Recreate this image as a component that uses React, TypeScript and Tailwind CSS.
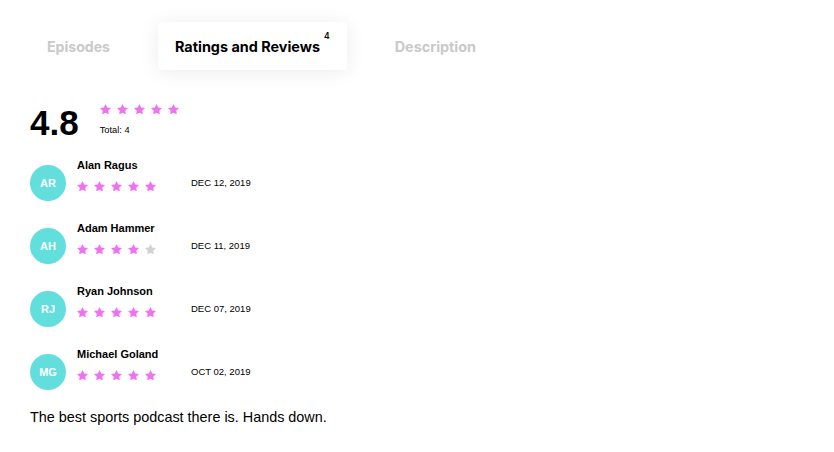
import React from "react";

const PINK = "#ee72f1";
const GRAY = "#d2d2d2";

function Star({ color, size = 11 }: { color: string; size?: number }) {
  return (
    <svg width={size} height={size * 0.951} viewBox="0 0 20 19.02" className="block shrink-0">
      <polygon
        points="10,0 13.09,6.26 20,7.27 15,12.14 16.18,19.02 10,15.77 3.82,19.02 5,12.14 0,7.27 6.91,6.26"
        fill={color}
      />
    </svg>
  );
}

function Stars({ n }: { n: number }) {
  return (
    <div className="flex gap-[6px]">
      {[0, 1, 2, 3, 4].map((i) => (
        <Star key={i} color={i < n ? PINK : GRAY} />
      ))}
    </div>
  );
}

const reviews = [
  { initials: "AR", name: "Alan Ragus", rating: 5, date: "DEC 12, 2019" },
  { initials: "AH", name: "Adam Hammer", rating: 4, date: "DEC 11, 2019" },
  { initials: "RJ", name: "Ryan Johnson", rating: 5, date: "DEC 07, 2019" },
  { initials: "MG", name: "Michael Goland", rating: 5, date: "OCT 02, 2019" },
];

export default function App() {
  return (
    <div
      className="w-[834px] h-[452px] bg-white pl-[30px] pt-[22px] text-black"
      style={{ fontFamily: '"Liberation Sans", Arial, sans-serif' }}
    >
      {/* Tabs */}
      <div className="flex gap-[31px] h-[48px]" style={{ fontFamily: "Inter, sans-serif" }}>
        <div className="h-full px-[17px] pt-[2px] flex items-center text-[14.1px] font-bold text-[#c9c9c9]">
          Episodes
        </div>
        <div className="h-full pl-[17px] pr-[17px] pt-[2px] flex items-center bg-white rounded-[4px] shadow-[0_2px_20px_rgba(0,0,0,0.08)]">
          <span className="text-[14.4px] font-bold text-black">Ratings and Reviews</span>
          <span className="text-[8.5px] font-semibold text-black ml-[4px] self-start mt-[6px]">4</span>
        </div>
        <div className="h-full px-[17px] pt-[2px] flex items-center text-[14.4px] font-bold text-[#c9c9c9]">
          Description
        </div>
      </div>

      {/* Overall rating */}
      <div className="flex items-start mt-[34px]">
        <div className="text-[35px] font-bold leading-[35px] mt-[1px]">4.8</div>
        <div className="ml-[21px] flex flex-col">
          <Stars n={5} />
          <div className="text-[9.3px] leading-none mt-[12px]">Total: 4</div>
        </div>
      </div>

      {/* Reviews */}
      <div className="flex flex-col gap-[22px] mt-[20px]">
        {reviews.map((r) => (
          <div key={r.initials} className="flex items-start">
            <div className="mt-[5px] w-[36px] h-[36px] rounded-full bg-[#62dfdc] flex items-center justify-center text-white text-[11px] font-bold">
              {r.initials}
            </div>
            <div className="ml-[11px] flex flex-col">
              <div className="text-[11px] font-bold leading-[11px]">{r.name}</div>
              <div className="flex items-start mt-[7px]">
                <div className="mt-[3px]">
                  <Stars n={r.rating} />
                </div>
                <div className="ml-[35px] text-[9.5px] leading-none">{r.date}</div>
              </div>
            </div>
          </div>
        ))}
      </div>

      <div className="mt-[20px] text-[14.4px] leading-none">
        The best sports podcast there is. Hands down.
      </div>
    </div>
  );
}
